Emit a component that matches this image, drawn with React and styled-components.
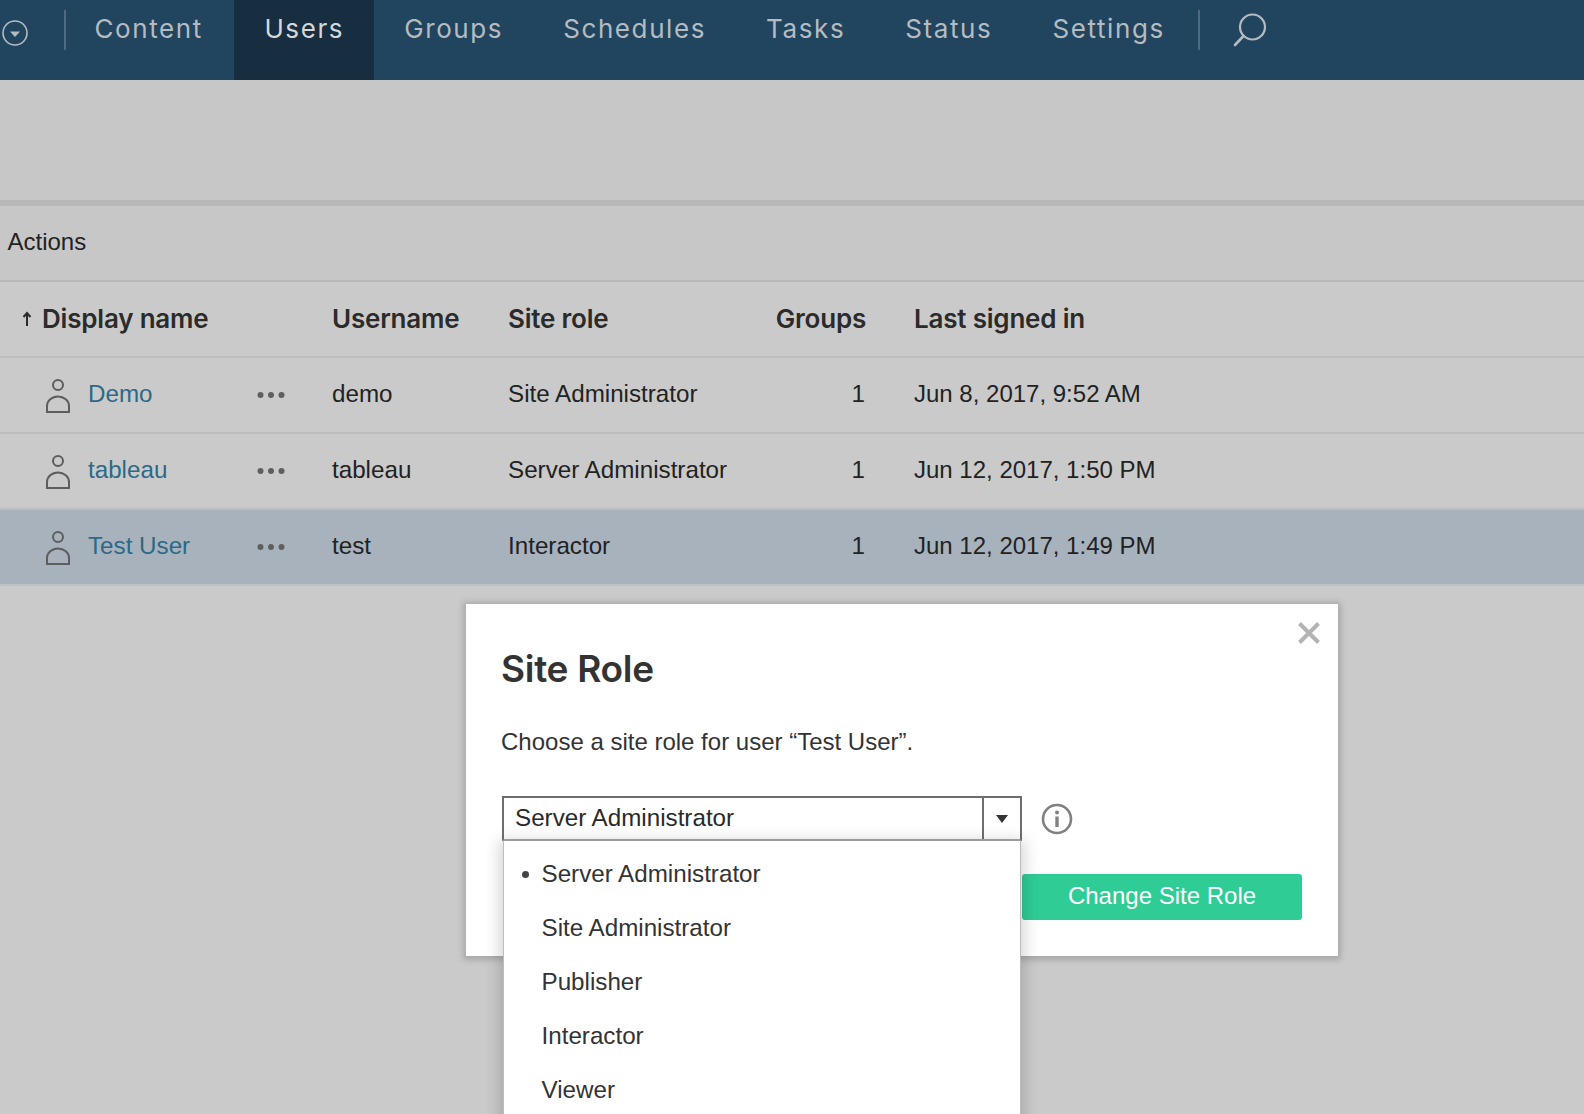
import React from 'react';
import styled, { createGlobalStyle } from 'styled-components';

const Global = createGlobalStyle`
  html, body { margin: 0; padding: 0; }
  body { background: #cacaca; height: 1114px; overflow: hidden; font-family: "Liberation Sans", Arial, sans-serif; color: #222; }
  * { box-sizing: border-box; }
`;

const Page = styled.div`
  position: relative;
  width: 1584px;
  height: 1114px;
  overflow: hidden;
  background: #cacaca;
`;

const Nav = styled.nav`
  display: flex;
  height: 80px;
  background: #21455f;
  align-items: stretch;
`;
const MenuIcon = styled.div`
  width: 64px;
  padding: 20px 0 0 2px;
  flex: none;
`;
const Divider = styled.div`
  flex: none;
  width: 2px;
  height: 40px;
  margin-top: 10px;
  background: #4d6a80;
`;
const NavList = styled.div`
  display: flex;
  margin-left: -1.5px;
  margin-right: 3px;
`;
const NavItem = styled.a`
  display: block;
  padding: 13px 30px 0;
  font-family: Inter, sans-serif;
  font-size: 26px;
  line-height: 32px;
  letter-spacing: 1.6px;
  color: ${p => (p.$active ? '#d4d8da' : '#b4bcc1')};
  background: ${p => (p.$active ? '#172e40' : 'transparent')};
  &:first-child {
    padding-right: 31.5px;
  }
`;
const SearchIcon = styled.div`
  padding: 13px 0 0 33px;
`;

const Toolbar = styled.div`
  height: 120px;
  background: #c7c7c7;
`;
const ActionsBar = styled.div`
  height: 82px;
  padding: 0 0 3px 7.5px;
  display: flex;
  align-items: center;
  background: #c7c7c7;
  border-top: 6px solid #b8b8b8;
  border-bottom: 2px solid #b8b8b8;
  font-size: 24px;
  color: #222;
`;

const HeaderRow = styled.div`
  display: grid;
  grid-template-columns: 332px 176px 200px 158px 1fr;
  height: 76px;
  padding-bottom: 2px;
  align-items: center;
  border-bottom: 2px solid #bdbdbd;
  font-family: Inter, sans-serif;
  font-weight: 600;
  font-size: 26px;
  letter-spacing: -0.2px;
  color: #2b2b2b;
`;
const HeadCell = styled.div`
  text-align: ${p => (p.$right ? 'right' : 'left')};
  padding-left: ${p => (p.$last ? '48px' : 0)};
  white-space: nowrap;
`;
const SortArrow = styled.span`
  display: inline-block;
  width: 20px;
  margin-left: 22px;
  vertical-align: 1px;
`;
const Row = styled.div`
  display: grid;
  grid-template-columns: 45px 43px 169px 75px 176px 200px 157px 1fr;
  height: 76px;
  padding-bottom: 2px;
  align-items: center;
  font-size: 24.2px;
  color: #222;
  background: ${p => (p.$selected ? '#a8b2bd' : '#cacaca')};
  border-bottom: 2px solid ${p => (p.$selected ? '#bdc0c4' : '#bdbdbd')};
`;
const UserLink = styled.a`
  color: #2b6a86;
`;
const Cell = styled.div`
  white-space: nowrap;
  text-align: ${p => (p.$right ? 'right' : 'left')};
  padding-left: ${p => (p.$last ? '49px' : 0)};
  font-size: ${p => (p.$last ? '24px' : 'inherit')};
`;
const PersonCell = styled.div`
  display: flex;
  align-items: center;
  grid-column: 2;
  padding-top: 3px;
`;
const DotsCell = styled.div`
  display: flex;
  align-items: center;
  padding-top: 1px;
`;

const Modal = styled.div`
  position: absolute;
  left: 466px;
  top: 604px;
  width: 872px;
  height: 352px;
  background: #fff;
  box-shadow: 0 1px 6px 3px rgba(0, 0, 0, 0.17);
  padding: 40px 36px 0 36px;
`;
const CloseBtn = styled.div`
  position: absolute;
  right: 18px;
  top: 18px;
  line-height: 0;
`;
const Title = styled.h2`
  margin: 0 0 0 -1px;
  font-family: Inter, sans-serif;
  font-weight: 600;
  font-size: 37px;
  line-height: 50px;
  letter-spacing: -0.3px;
  color: #333;
`;
const Prompt = styled.p`
  margin: 32px 0 0 -1px;
  font-size: 24px;
  line-height: 32px;
  color: #333;
`;
const SelectRow = styled.div`
  display: flex;
  align-items: center;
  margin-top: 38px;
  gap: 19px;
`;
const SelectBox = styled.div`
  position: relative;
  display: flex;
  width: 520px;
  height: 45px;
  border: 2px solid #6e6e6e;
  border-bottom-color: #a8a8a8;
  font-size: 24.2px;
  color: #2a2a2a;
  background: #fff;
`;
const SelectValue = styled.div`
  flex: 1;
  padding-left: 11px;
  line-height: 40px;
`;
const SelectArrow = styled.div`
  width: 38px;
  border-left: 2px solid #6e6e6e;
  display: flex;
  align-items: center;
  justify-content: center;
`;
const Menu = styled.ul`
  position: absolute;
  z-index: 2;
  left: -1px;
  top: 43px;
  width: 518px;
  height: 300px;
  margin: 0;
  padding: 6px 0 0;
  list-style: none;
  background: #fff;
  border-left: 1px solid #bdbdbd;
  border-right: 1px solid #bdbdbd;
  box-shadow: 0 3px 14px 4px rgba(0, 0, 0, 0.16);
`;
const MenuItem = styled.li`
  position: relative;
  height: 54px;
  line-height: 54px;
  padding-left: 37.5px;
  font-size: 24.2px;
  color: #333;
  &::before {
    content: ${p => (p.$current ? '""' : 'none')};
    position: absolute;
    left: 18px;
    top: 24px;
    width: 7px;
    height: 7px;
    border-radius: 50%;
    background: #444;
  }
`;
const Footer = styled.div`
  display: flex;
  justify-content: flex-end;
  margin-top: 33px;
`;
const PrimaryButton = styled.button`
  width: 280px;
  height: 46px;
  border: 0;
  border-radius: 3px;
  background: #2fcc96;
  color: #fff;
  font-family: "Liberation Sans", Arial, sans-serif;
  font-size: 24px;
  padding: 0 0 2px 0;
`;

const Person = () => (
  <svg width="26" height="36" viewBox="0 0 26 36" fill="none" stroke="#5d5d5d" strokeWidth="2">
    <circle cx="13" cy="7" r="5" />
    <path d="M2 34 V28 a11 9.5 0 0 1 22 0 V34 Z" />
  </svg>
);
const Dots = () => (
  <svg width="28" height="8" viewBox="0 0 28 8" fill="#5f5f5f">
    <circle cx="3.5" cy="4" r="3" />
    <circle cx="14" cy="4" r="3" />
    <circle cx="24.5" cy="4" r="3" />
  </svg>
);

const tabs = ['Content', 'Users', 'Groups', 'Schedules', 'Tasks', 'Status', 'Settings'];
const users = [
  { name: 'Demo', user: 'demo', role: 'Site Administrator', last: 'Jun 8, 2017, 9:52 AM' },
  { name: 'tableau', user: 'tableau', role: 'Server Administrator', last: 'Jun 12, 2017, 1:50 PM' },
  { name: 'Test User', user: 'test', role: 'Interactor', last: 'Jun 12, 2017, 1:49 PM', selected: true },
];
const roles = ['Server Administrator', 'Site Administrator', 'Publisher', 'Interactor', 'Viewer'];

export default function App() {
  return (
    <Page>
      <Global />
      <Nav>
        <MenuIcon>
          <svg width="26" height="26" viewBox="0 0 26 26" fill="none">
            <circle cx="13" cy="13" r="12" stroke="#b4bcc1" strokeWidth="1.6" />
            <path d="M8 11.5 H18 L13 17 Z" fill="#b4bcc1" />
          </svg>
        </MenuIcon>
        <Divider />
        <NavList>
          {tabs.map(t => (
            <NavItem key={t} $active={t === 'Users'}>{t}</NavItem>
          ))}
        </NavList>
        <Divider />
        <SearchIcon>
          <svg width="34" height="34" viewBox="0 0 34 34" fill="none" stroke="#b4bcc1" strokeWidth="2.2">
            <circle cx="19.5" cy="14" r="12.5" />
            <path d="M10.5 23 L2 32" strokeWidth="2.6" strokeLinecap="round" />
          </svg>
        </SearchIcon>
      </Nav>
      <Toolbar />
      <ActionsBar>Actions</ActionsBar>
      <HeaderRow>
        <HeadCell>
          <SortArrow>
            <svg width="10" height="16" viewBox="0 0 10 16" fill="none" stroke="#2b2b2b" strokeWidth="2">
              <path d="M5 15 V2 M1.5 6 L5 2 L8.5 6" />
            </svg>
          </SortArrow>
          Display name
        </HeadCell>
        <HeadCell>Username</HeadCell>
        <HeadCell>Site role</HeadCell>
        <HeadCell $right>Groups</HeadCell>
        <HeadCell $last>Last signed in</HeadCell>
      </HeaderRow>
      {users.map(u => (
        <Row key={u.user} $selected={u.selected}>
          <PersonCell><Person /></PersonCell>
          <Cell><UserLink>{u.name}</UserLink></Cell>
          <DotsCell><Dots /></DotsCell>
          <Cell>{u.user}</Cell>
          <Cell>{u.role}</Cell>
          <Cell $right>1</Cell>
          <Cell $last>{u.last}</Cell>
        </Row>
      ))}
      <Modal>
        <CloseBtn>
          <svg width="22" height="22" viewBox="0 0 22 22" stroke="#b3b3b3" strokeWidth="4">
            <path d="M1.5 1.5 L20.5 20.5 M20.5 1.5 L1.5 20.5" />
          </svg>
        </CloseBtn>
        <Title>Site Role</Title>
        <Prompt>Choose a site role for user “Test User”.</Prompt>
        <SelectRow>
          <SelectBox>
            <SelectValue>Server Administrator</SelectValue>
            <SelectArrow>
              <svg width="12" height="8" viewBox="0 0 12 8" fill="#333">
                <path d="M0 0 H12 L6 8 Z" />
              </svg>
            </SelectArrow>
            <Menu>
              {roles.map((r, i) => (
                <MenuItem key={r} $current={i === 0}>{r}</MenuItem>
              ))}
            </Menu>
          </SelectBox>
          <svg width="32" height="32" viewBox="0 0 32 32" fill="none">
            <circle cx="16" cy="16" r="14" stroke="#808080" strokeWidth="2.6" />
            <circle cx="16" cy="9.5" r="2" fill="#808080" />
            <path d="M16 13.5 V24" stroke="#808080" strokeWidth="3.4" />
          </svg>
        </SelectRow>
        <Footer>
          <PrimaryButton>Change Site Role</PrimaryButton>
        </Footer>
      </Modal>
    </Page>
  );
}
